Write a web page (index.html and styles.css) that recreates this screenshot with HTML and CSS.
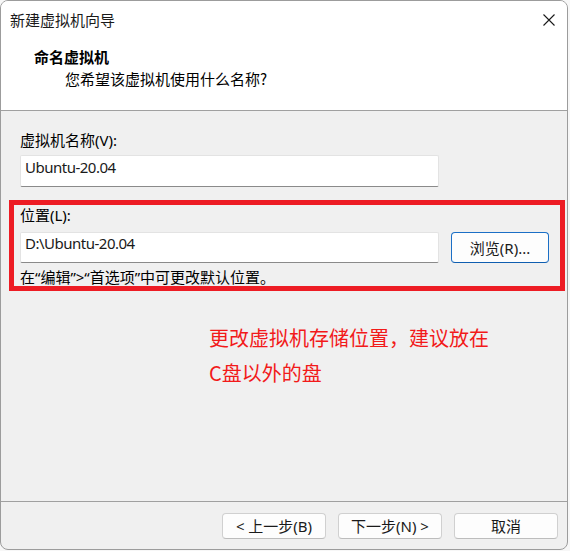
FILE: index.html
```html
<!DOCTYPE html>
<html lang="zh-CN">
<head>
<meta charset="utf-8">
<title>新建虚拟机向导</title>
<link rel="stylesheet" href="styles.css">
</head>
<body>
<div class="window">
  <div class="titlebar">
    <span class="title">新建虚拟机向导</span>
    <span class="close">
      <svg width="14" height="14" viewBox="0 0 14 14"><path d="M1.5 1.5 L12.5 12.5 M12.5 1.5 L1.5 12.5" stroke="#1a1a1a" stroke-width="1.1" fill="none"/></svg>
    </span>
  </div>
  <div class="header">
    <div class="h-title">命名虚拟机</div>
    <div class="h-sub">您希望该虚拟机使用什么名称?</div>
  </div>
  <div class="content">
    <div class="label">虚拟机名称(V):</div>
    <div class="input">Ubuntu-20.04</div>
    <div class="redbox">
      <div class="label">位置(L):</div>
      <div class="row">
        <div class="input">D:\Ubuntu-20.04</div>
        <div class="btn btn-primary">浏览(R)...</div>
      </div>
      <div class="hint">在“编辑”&gt;“首选项”中可更改默认位置。</div>
    </div>
    <div class="note">更改虚拟机存储位置，建议放在<br>C盘以外的盘</div>
  </div>
  <div class="footer">
    <div class="btn">&lt; 上一步(B)</div>
    <div class="btn">下一步(N) &gt;</div>
    <div class="btn">取消</div>
  </div>
</div>
</body>
</html>
```

FILE: styles.css
```css
* { box-sizing: border-box; }
html, body {
  margin: 0;
  padding: 0;
  background: #f7f7f7;
}
body {
  font-family: "Noto Sans", "Noto Sans CJK SC", sans-serif;
  font-size: 15px;
  color: #000;
}
.window {
  width: 568px;
  height: 550px;
  border: 1px solid #9c9c9c;
  border-radius: 8px;
  overflow: hidden;
  background: #f0f0f0;
  display: flex;
  flex-direction: column;
}
.titlebar {
  height: 38px;
  background: #fff;
  display: flex;
  align-items: center;
  justify-content: space-between;
  padding-left: 9px;
  padding-right: 11px;
  flex: none;
}
.title {
  font-family: "Noto Sans CJK SC", sans-serif;
  line-height: 20px;
  color: #1a1a1a;
}
.close {
  display: flex;
  width: 14px;
  height: 14px;
}
.header {
  background: #fff;
  height: 72px;
  border-bottom: 1px solid #a0a0a0;
  padding-top: 8px;
  flex: none;
}
.h-title {
  font-family: "Noto Sans CJK SC", sans-serif;
  font-weight: 700;
  line-height: 20px;
  padding-left: 33px;
}
.h-sub {
  font-family: "Noto Sans CJK SC", sans-serif;
  line-height: 20px;
  margin-top: 2px;
  padding-left: 64px;
}
.content {
  flex: 1;
  padding-top: 19px;
  padding-left: 19px;
}
.label {
  line-height: 20px;
}
.input {
  width: 419px;
  height: 32px;
  margin-top: 5px;
  background: #fff;
  border: 1px solid #e3e3e3;
  border-bottom-color: #8a8a8a;
  border-radius: 2px;
  padding-left: 4px;
  line-height: 22px;
  letter-spacing: -0.5px;
  color: #1a1a1a;
}
.redbox {
  margin-top: 13px;
  margin-left: -11px;
  width: 556px;
  border: 5px solid #ed1c24;
  padding-left: 6px;
}
.row {
  display: flex;
  align-items: flex-start;
  gap: 12px;
  margin-top: 7px;
}
.row .input {
  margin-top: 0;
  height: 31px;
  line-height: 21px;
}
.btn {
  height: 26px;
  width: 104px;
  background: #fdfdfd;
  border: 1px solid #d0d0d0;
  border-bottom-color: #bdbdbd;
  border-radius: 4px;
  display: flex;
  align-items: center;
  justify-content: center;
  color: #1a1a1a;
  line-height: 20px;
}
.btn-primary {
  width: 98px;
  height: 31px;
  border: 1px solid #1b6fc6;
  border-bottom-color: #0f5eb0;
}
.hint {
  margin-top: 5px;
  line-height: 18px;
  font-size: 15px;
}
.note {
  margin-top: 29px;
  margin-left: 189px;
  font-family: "Noto Sans CJK SC", sans-serif;
  font-size: 20px;
  line-height: 35px;
  color: #f21a1a;
}
.footer {
  flex: none;
  height: 48px;
  border-top: 1px solid #a0a0a0;
  display: flex;
  justify-content: flex-end;
  align-items: flex-start;
  gap: 12px;
  padding-top: 11px;
  padding-right: 9px;
}
.footer .btn {
  width: 104px;
}
```
